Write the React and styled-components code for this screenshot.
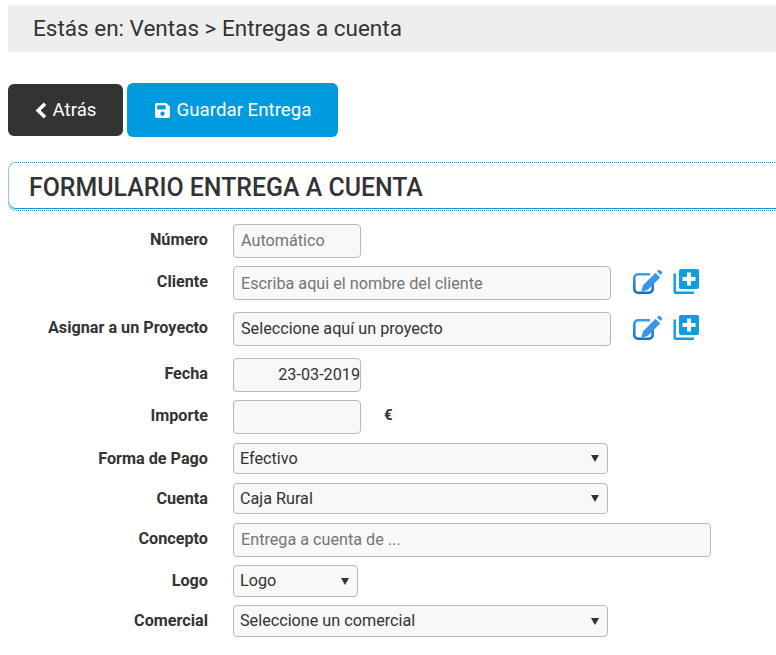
import React from 'react';
import styled, { createGlobalStyle } from 'styled-components';
import { FaSave } from 'react-icons/fa';

const Global = createGlobalStyle`
  html, body { margin: 0; padding: 0; background: #fff; }
  body { font-family: Roboto, "Liberation Sans", sans-serif; color: #333; overflow: hidden; }
  * { box-sizing: border-box; }
`;

const Page = styled.div`
  width: 776px;
  height: 655px;
  overflow: hidden;
  padding: 5px 0 0 8px;
`;

const Breadcrumb = styled.div`
  height: 47px;
  background: #eee;
  padding-left: 25px;
  font-size: 22.5px;
  line-height: 47px;
  color: #333;
`;

const Toolbar = styled.div`
  display: flex;
  align-items: center;
  gap: 4px;
  margin-top: 31px;
`;

const Button = styled.button`
  display: flex;
  align-items: center;
  justify-content: center;
  gap: ${(p) => p.$gap}px;
  width: ${(p) => p.$width}px;
  height: ${(p) => p.$height}px;
  border: 0;
  border-radius: 6px;
  background: ${(p) => p.$bg};
  color: #fff;
  font-family: inherit;
  font-size: 18.7px;
`;

const Title = styled.h2`
  margin: 25px 0 13px;
  width: 780px;
  height: 49px;
  padding-left: 20px;
  border: 1px dotted #009bdf;
  border-right: 0;
  border-radius: 8px 0 0 8px;
  box-shadow: inset 0 -1px 0 #fff, inset 0 -2px 0 #009bdf;
  font-size: 24.9px;
  font-weight: 500;
  line-height: 49px;
  color: #333;
`;

const Row = styled.div`
  display: grid;
  grid-template-columns: 225px auto 1fr;
  align-items: center;
  height: ${(p) => p.$height}px;
  margin-bottom: ${(p) => p.$after}px;
`;

const Label = styled.label`
  padding-right: 25px;
  padding-bottom: ${(p) => p.$lift}px;
  text-align: right;
  font-size: 16.2px;
  font-weight: 700;
  color: #333;
`;

const TextInput = styled.input`
  display: block;
  grid-column: 2;
  width: ${(p) => p.$width}px;
  height: 34px;
  padding: 0 ${(p) => (p.$flush ? 0 : 7)}px ${(p) => p.$lift}px 7px;
  border: 1px solid #b8b8b8;
  border-radius: 4px;
  background: #f8f8f8;
  font-family: inherit;
  font-size: 16.2px;
  color: #333;
  text-align: ${(p) => (p.$flush ? 'right' : 'left')};
  &::placeholder { color: #757575; opacity: 1; }
`;

const arrow =
  "url(\"data:image/svg+xml,%3Csvg xmlns='http://www.w3.org/2000/svg' width='8' height='7'%3E%3Cpath d='M0 0h8L4 7z' fill='%23333'/%3E%3C/svg%3E\")";

const Select = styled.select`
  display: block;
  grid-column: 2;
  appearance: none;
  width: ${(p) => p.$width}px;
  height: ${(p) => p.$height}px;
  padding: 0 20px ${(p) => (p.$raised ? 2 : 0)}px 6px;
  border: 1px solid #b8b8b8;
  border-radius: 4px;
  background: #f8f8f8 ${arrow} no-repeat right 8px center;
  font-family: inherit;
  font-size: 16.2px;
  color: #333;
`;

const Extras = styled.div`
  display: flex;
  align-items: flex-start;
  gap: 11px;
  padding: 3px 0 0 22px;
  height: 34px;
`;

const Euro = styled.span`
  padding-left: 23px;
  padding-bottom: 4px;
  font-size: 15px;
  font-weight: 700;
`;

const BackIcon = () => (
  <svg width="12" height="17" viewBox="0 0 12 17">
    <path d="M10 1.800L3.200 8.500L10 15.200" fill="none" stroke="#fff" strokeWidth="3.600" />
  </svg>
);

const EditIcon = () => (
  <svg width="29" height="26" viewBox="0 0 29 26">
    <defs>
      <linearGradient id="editGrad" x1="0" y1="0" x2="0" y2="1">
        <stop offset="0" stopColor="#3d9df2" />
        <stop offset="1" stopColor="#1a6fc0" />
      </linearGradient>
    </defs>
    <path
      fill="none"
      stroke="url(#editGrad)"
      strokeWidth="2.600"
      d="M17 5.300H5a3.700 3.700 0 0 0-3.700 3.700v11a3.700 3.700 0 0 0 3.700 3.700h11a3.700 3.700 0 0 0 3.700-3.700V13"
    />
    <path
      fill="#3a96ec"
      d="M22.500 3.800l4.700 4.700-12.500 12.500-6.500 1.800 1.800-6.500zM24 2.300l1.100-1.100a1.500 1.500 0 0 1 2.100 0l1.400 1.400a1.500 1.500 0 0 1 0 2.100l-1 1.200z"
    />
  </svg>
);

const AddIcon = () => (
  <svg width="27" height="25" viewBox="0 0 27 25" fill="#0c9ee0">
    <rect x="6" y="0" width="20" height="20" rx="2" />
    <path d="M14 3.500h4v4.500h4.500v4H18v4.500h-4V12H9.500V8H14z" fill="#fff" />
    <path d="M0.500 4.500h2.400v18h18v2.400H2.500a2 2 0 0 1-2-2z" />
  </svg>
);

const rowIcons = (
  <Extras>
    <EditIcon />
    <AddIcon />
  </Extras>
);

export default function App() {
  return (
    <Page>
      <Global />
      <Breadcrumb>Estás en: Ventas &gt; Entregas a cuenta</Breadcrumb>
      <Toolbar>
        <Button $bg="#333" $width={115} $height={52} $gap={6}>
          <BackIcon />
          Atrás
        </Button>
        <Button $bg="#009bdf" $width={211} $height={54} $gap={6}>
          <FaSave size={17} />
          Guardar Entrega
        </Button>
      </Toolbar>
      <Title>FORMULARIO ENTREGA A CUENTA</Title>
      <Row $height={34} $after={8}>
        <Label $lift={4}>Número</Label>
        <TextInput $lift={2} $width={128} placeholder="Automático" readOnly />
      </Row>
      <Row $height={34} $after={12}>
        <Label $lift={4}>Cliente</Label>
        <TextInput $lift={0} $width={378} placeholder="Escriba aqui el nombre del cliente" />
        {rowIcons}
      </Row>
      <Row $height={34} $after={12}>
        <Label $lift={4}>Asignar a un Proyecto</Label>
        <TextInput $lift={2} $width={378} defaultValue="Seleccione aquí un proyecto" />
        {rowIcons}
      </Row>
      <Row $height={34} $after={8}>
        <Label $lift={4}>Fecha</Label>
        <TextInput $lift={2} $width={128} $flush defaultValue="23-03-2019" />
      </Row>
      <Row $height={34} $after={9}>
        <Label $lift={4}>Importe</Label>
        <TextInput $lift={2} $width={128} />
        <Euro>€</Euro>
      </Row>
      <Row $height={31} $after={9}>
        <Label $lift={0}>Forma de Pago</Label>
        <Select $width={375} $height={31}><option>Efectivo</option></Select>
      </Row>
      <Row $height={31} $after={9}>
        <Label $lift={0}>Cuenta</Label>
        <Select $width={375} $height={31}><option>Caja Rural</option></Select>
      </Row>
      <Row $height={34} $after={8}>
        <Label $lift={4}>Concepto</Label>
        <TextInput $lift={2} $width={478} placeholder="Entrega a cuenta de ..." />
      </Row>
      <Row $height={32} $after={8}>
        <Label $lift={2}>Logo</Label>
        <Select $raised $width={125} $height={32}><option>Logo</option></Select>
      </Row>
      <Row $height={32} $after={0}>
        <Label $lift={2}>Comercial</Label>
        <Select $raised $width={375} $height={32}><option>Seleccione un comercial</option></Select>
      </Row>
    </Page>
  );
}
